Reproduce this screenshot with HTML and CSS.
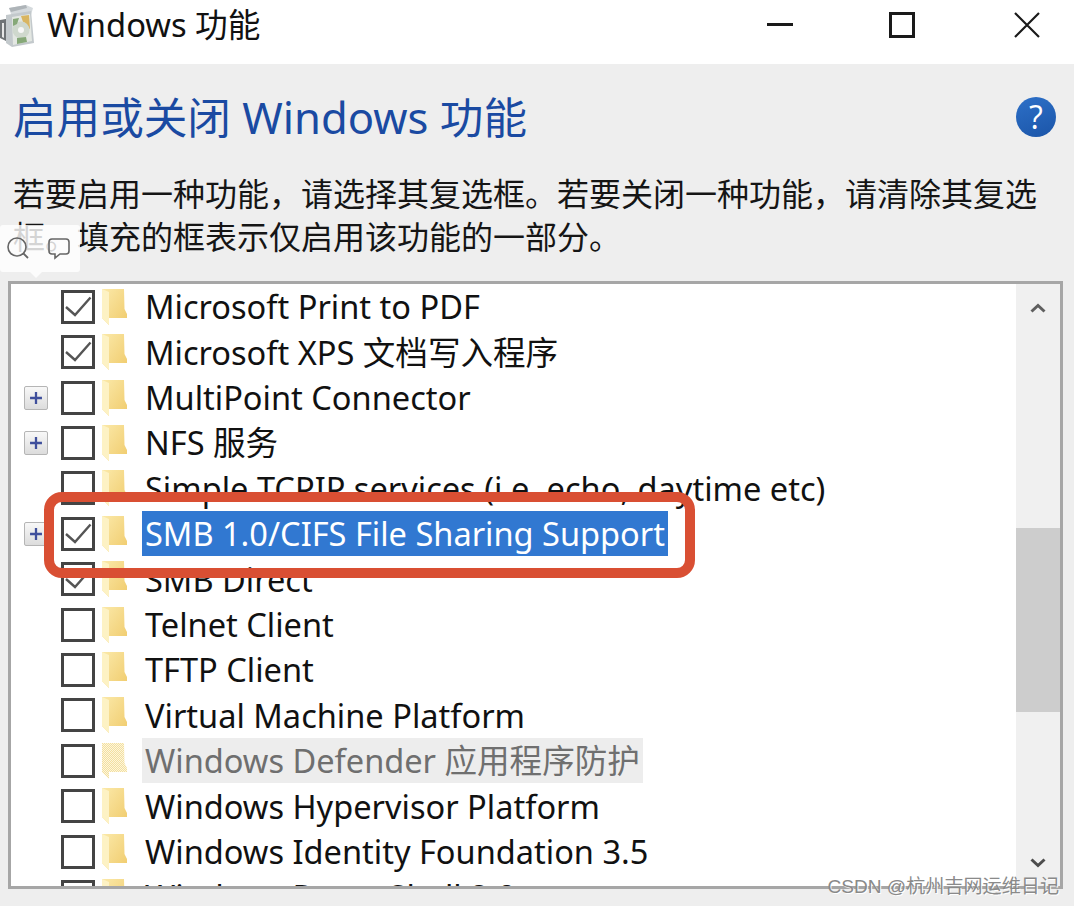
FILE: index.html
```html
<!DOCTYPE html>
<html lang="zh-CN">
<head>
<meta charset="utf-8">
<title>Windows 功能</title>
<link rel="stylesheet" href="styles.css">
</head>
<body>
<svg class="defs" width="0" height="0" aria-hidden="true">
  <defs>
    <linearGradient id="fold" x1="0" y1="0" x2="1" y2="1">
      <stop offset="0" stop-color="#fbe9a9"/>
      <stop offset="1" stop-color="#f0cb6c"/>
    </linearGradient>
    <pattern id="dith" width="2" height="2" patternUnits="userSpaceOnUse">
      <rect width="1" height="1" fill="#f3dfa0"/>
      <rect x="1" y="1" width="1" height="1" fill="#f3dfa0"/>
      <rect x="1" width="1" height="1" fill="#fdf6dc"/>
      <rect y="1" width="1" height="1" fill="#fdf6dc"/>
    </pattern>
    <symbol id="folder" viewBox="0 0 25 36">
      <path d="M0 0H22L22.500 20L25 25V29H7V36L0 29Z" fill="url(#fold)"/>
      <path d="M0 0L7 3V36L0 29Z" fill="#fdf2c4"/>
    </symbol>
    <symbol id="folder-off" viewBox="0 0 25 36">
      <path d="M0 0H22L22.500 20L25 25V29H7V36L0 29Z" fill="url(#dith)"/>
    </symbol>
    <symbol id="tick" viewBox="0 0 28 28">
      <path d="M2 14L11 22L26.500 4.500" fill="none" stroke="#555" stroke-width="2.400"/>
    </symbol>
    <symbol id="plus" viewBox="0 0 24 24">
      <path d="M5.500 12H18.500M12 5.500V18.500" stroke="#3f4f9c" stroke-width="2.500" fill="none"/>
    </symbol>
  </defs>
</svg>

<header class="titlebar">
  <svg class="app-icon" viewBox="0 0 36 42" aria-hidden="true">
    <path d="M9 3L26 0L33 3L31 10L12 12Z" fill="#d5dadd"/>
    <path d="M9 3L26 0L27 3L11 7Z" fill="#aeb4b8"/>
    <path d="M6 10L31 6L34 38L12 42L6 38Z" fill="#c3c9cc"/>
    <path d="M12 12L30 9L32 36L13 40Z" fill="#e3e7e2"/>
    <path d="M21 11L29 10L30 24L24 20Z" fill="#d9b560"/>
    <circle cx="21" cy="25" r="8.500" fill="#cfd8cd"/>
    <circle cx="21" cy="25" r="3" fill="#f7f7f7"/>
    <path d="M13 14L19 13L17 19L13 21ZM17 33L26 32L27 37L17 39Z" fill="#86a878"/>
    <path d="M0 15L6 14V36L0 33Z" fill="#6f7376"/>
    <path d="M2 18L4 18V33L2 32Z" fill="#e6e6e6"/>
  </svg>
  <span class="window-title">Windows 功能</span>
  <div class="controls">
    <span class="ctl-min"></span>
    <span class="ctl-max"></span>
    <svg class="ctl-close" viewBox="0 0 26 26" aria-hidden="true"><path d="M1 1L25 25M25 1L1 25" stroke="#1a1a1a" stroke-width="2.200" fill="none"/></svg>
  </div>
</header>

<main class="content">
  <div class="heading-row">
    <h1 class="heading">启用或关闭 Windows 功能</h1>
    <span class="help">?</span>
  </div>
  <p class="desc">若要启用一种功能，请选择其复选框。若要关闭一种功能，请清除其复选框。填充的框表示仅启用该功能的一部分。</p>

  <section class="listbox">
    <div class="rows">
      <div class="row"><span class="exp"></span><span class="cb"><svg class="tick"><use href="#tick"/></svg></span><svg class="folder"><use href="#folder"/></svg><span class="label">Microsoft Print to PDF</span></div>
      <div class="row"><span class="exp"></span><span class="cb"><svg class="tick"><use href="#tick"/></svg></span><svg class="folder"><use href="#folder"/></svg><span class="label">Microsoft XPS 文档写入程序</span></div>
      <div class="row"><span class="exp on"><svg class="plus"><use href="#plus"/></svg></span><span class="cb"></span><svg class="folder"><use href="#folder"/></svg><span class="label">MultiPoint Connector</span></div>
      <div class="row"><span class="exp on"><svg class="plus"><use href="#plus"/></svg></span><span class="cb"></span><svg class="folder"><use href="#folder"/></svg><span class="label">NFS 服务</span></div>
      <div class="row"><span class="exp"></span><span class="cb"></span><svg class="folder"><use href="#folder"/></svg><span class="label">Simple TCPIP services (i.e. echo, daytime etc)</span></div>
      <div class="row"><span class="exp on"><svg class="plus"><use href="#plus"/></svg></span><span class="cb"><svg class="tick"><use href="#tick"/></svg></span><svg class="folder"><use href="#folder"/></svg><span class="label selected">SMB 1.0/CIFS File Sharing Support</span></div>
      <div class="row"><span class="exp"></span><span class="cb"><svg class="tick"><use href="#tick"/></svg></span><svg class="folder"><use href="#folder"/></svg><span class="label">SMB Direct</span></div>
      <div class="row"><span class="exp"></span><span class="cb"></span><svg class="folder"><use href="#folder"/></svg><span class="label">Telnet Client</span></div>
      <div class="row"><span class="exp"></span><span class="cb"></span><svg class="folder"><use href="#folder"/></svg><span class="label">TFTP Client</span></div>
      <div class="row"><span class="exp"></span><span class="cb"></span><svg class="folder"><use href="#folder"/></svg><span class="label">Virtual Machine Platform</span></div>
      <div class="row"><span class="exp"></span><span class="cb"></span><svg class="folder"><use href="#folder-off"/></svg><span class="label disabled">Windows Defender 应用程序防护</span></div>
      <div class="row"><span class="exp"></span><span class="cb"></span><svg class="folder"><use href="#folder"/></svg><span class="label">Windows Hypervisor Platform</span></div>
      <div class="row"><span class="exp"></span><span class="cb"></span><svg class="folder"><use href="#folder"/></svg><span class="label">Windows Identity Foundation 3.5</span></div>
      <div class="row"><span class="exp"></span><span class="cb"></span><svg class="folder"><use href="#folder"/></svg><span class="label">Windows PowerShell 2.0</span></div>
    </div>
    <div class="scrollbar">
      <svg class="chev" viewBox="0 0 16 10" aria-hidden="true"><path d="M1.500 8.500L8 2.500L14.500 8.500" fill="none" stroke="#5f5f5f" stroke-width="3"/></svg>
      <div class="thumb"></div>
      <svg class="chev chev-down" viewBox="0 0 16 10" aria-hidden="true"><path d="M1.500 1.500L8 7.500L14.500 1.500" fill="none" stroke="#4d4d4d" stroke-width="3"/></svg>
    </div>
  </section>
</main>

<div class="highlight"></div>

<div class="tooltip">
  <svg class="tip-icon" viewBox="0 0 24 24" aria-hidden="true"><circle cx="10" cy="10" r="9" fill="none" stroke="#666" stroke-width="1.600"/><path d="M16.500 16.500L21 21" stroke="#666" stroke-width="1.800"/></svg>
  <svg class="tip-icon" viewBox="0 0 24 24" aria-hidden="true"><path d="M5 2H19Q22 2 22 5V14Q22 17 19 17H13L8 21V17H5Q2 17 2 14V5Q2 2 5 2Z" fill="none" stroke="#666" stroke-width="1.600"/></svg>
</div>

<div class="watermark">CSDN @杭州吉网运维日记</div>
</body>
</html>
```
FILE: styles.css
```css
* { box-sizing: border-box; }
html, body { margin: 0; height: 906px; overflow: hidden; }
body {
  position: relative;
  background: #eeeeee;
  color: #111;
  font-family: "Noto Sans", "Noto Sans CJK SC", sans-serif;
}
.defs { position: absolute; }

.titlebar {
  height: 64px;
  background: #fff;
  display: flex;
  align-items: center;
  padding-bottom: 14px;
}
.app-icon { width: 36px; height: 42px; margin-right: 11px; margin-top: 2px; flex: none; }
.window-title { font-size: 32.700px; line-height: 42px; }
.controls { margin-left: auto; display: flex; align-items: center; padding-right: 34px; }
.ctl-min { width: 26px; height: 3px; background: #1a1a1a; margin-right: 96px; margin-top: -2px; }
.ctl-max { width: 26px; height: 26px; border: 3px solid #1a1a1a; margin-right: 99px; }
.ctl-close { width: 26px; height: 26px; }

.content { padding: 0 11px 0 8px; }
.heading-row { display: flex; align-items: center; height: 108px; padding: 0 7px 2px 5px; justify-content: space-between; }
.heading { margin: 0; font-size: 43.600px; font-weight: 400; line-height: 60px; color: #1a4aa2; }
.help {
  width: 40px; height: 40px; border-radius: 50%;
  background: linear-gradient(160deg, #2d70c8, #1b55a8);
  color: #fff; font-size: 32px; line-height: 40px; text-align: center;
  font-family: "Open Sans", sans-serif;
}
.desc { margin: 0; padding: 0 0 0 5px; font-size: 32px; line-height: 43px; height: 109px; color: #151515; }

.listbox {
  height: 608px;
  width: 1055px;
  border: 3px solid #a6a6a6;
  background: #fff;
  display: flex;
  overflow: hidden;
}
.rows { flex: 1; min-width: 0; overflow: hidden; }
.row { height: 45.420px; display: flex; align-items: center; white-space: nowrap; }
.exp { width: 50px; flex: none; padding-left: 13px; display: flex; }
.plus {
  width: 24px; height: 24px; border: 1px solid #b5b5b5; border-radius: 2px;
  background: linear-gradient(#f8f8f8, #dcdcdc);
}
.cb {
  width: 34px; height: 34px; flex: none; border: 3px solid #444; background: #fff;
  display: flex; align-items: center; justify-content: center;
}
.tick { width: 28px; height: 28px; }
.folder { width: 25px; height: 36px; margin-left: 7px; flex: none; }
.label {
  margin-left: 15px; padding: 0 3px; height: 45px; line-height: 45px;
  font-size: 32.550px;
}
.selected { background: #3178d1; color: #fff; }
.disabled { background: #ededed; color: #6f6f6f; }

.scrollbar {
  width: 44px; flex: none; background: #f0f0f0;
  display: flex; flex-direction: column; align-items: center;
  padding-top: 19px;
}
.chev { width: 16px; height: 10px; flex: none; }
.thumb { width: 100%; height: 184px; background: #cdcdcd; margin-top: 215px; }
.chev-down { margin-top: 146px; }

.highlight {
  position: absolute; left: 44px; top: 492px; width: 651px; height: 86px;
  border: 10px solid #d94f33; border-radius: 18px;
}
.tooltip {
  position: absolute; left: 0; top: 225px; width: 80px; height: 47px;
  background: rgba(255, 255, 255, 0.82); border-radius: 3px;
  display: flex; align-items: center; gap: 16px; padding-left: 7px;
}
.tooltip::after {
  content: ""; position: absolute; left: 30px; top: 47px;
  border: 6px solid transparent; border-top-color: rgba(255, 255, 255, 0.82); border-bottom: 0;
}
.tip-icon { width: 24px; height: 24px; }
.watermark {
  position: absolute; right: 15px; top: 873px;
  font-size: 19.100px; line-height: 28px; color: #8a8a8a;
  text-shadow: 1px 1px 0 #fff;
  font-family: "Liberation Sans", "Noto Sans CJK SC", sans-serif;
}
```
